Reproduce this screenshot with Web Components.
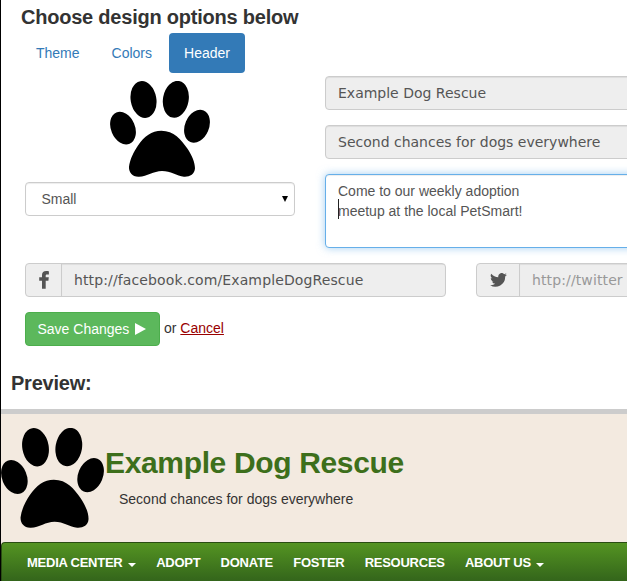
<!DOCTYPE html>
<html lang="en">
<head>
<meta charset="utf-8">
<title>Design options</title>
<style>
body{margin:0;background:#fff;overflow:hidden}
</style>
</head>
<body>
<design-page></design-page>
<script>
function define(name, html){
  customElements.define(name, class extends HTMLElement{
    constructor(){
      super();
      this.attachShadow({mode:'open'}).innerHTML = html;
    }
  });
}

define('paw-mark', `
<style>:host{display:block}svg{display:block;width:100%;height:100%}</style>
<svg viewBox="30 32.5 300 288.5" preserveAspectRatio="none">
<ellipse cx="130.5" cy="88" rx="38.5" ry="55.8" transform="rotate(-10 130.5 88)"/>
<ellipse cx="227.5" cy="87.5" rx="38.5" ry="55.8" transform="rotate(10 227.5 87.5)"/>
<ellipse cx="69" cy="174" rx="36" ry="51" transform="rotate(-23 69 174)"/>
<ellipse cx="291" cy="168.5" rx="36" ry="51.2" transform="rotate(23 291 168.5)"/>
<path d="M184 182C222 182 243 209 262 235C276 256 285 276 285 295C284 314 268 321 252 320C230 318 212 303 186 303C160 303 142 320 117 320C97 321 86 307 87 290C90 267 101 245 114 226C133 199 155 182 184 182Z"/>
</svg>`);

define('tab-item', `
<style>
:host{display:block;padding:10px 15px;border-radius:4px;color:#337ab7;line-height:20px}
:host([active]){background:#337ab7;color:#fff}
</style><slot></slot>`);

define('text-field', `
<style>
:host{display:block;box-sizing:border-box;height:34px;padding:6px 12px;border:1px solid #ccc;border-radius:4px;
background:#eee;color:#555;line-height:20px;white-space:nowrap;overflow:hidden;font-family:"DejaVu Sans",sans-serif;box-shadow:inset 0 1px 1px rgba(0,0,0,.075)}
</style><slot></slot>`);

define('text-box', `<style>
:host{display:block;position:relative;box-sizing:border-box;height:74px;padding:6px 12px;border:1px solid #66afe9;border-radius:4px;
background:#fff;color:#555;line-height:20px;white-space:pre;box-shadow:inset 0 1px 1px rgba(0,0,0,.075),0 0 8px rgba(102,175,233,.6)}
i{position:absolute;left:12px;top:24px;width:1px;height:20px;background:#222}
</style><slot></slot><i></i>`);

define('select-box', `
<style>
:host{display:flex;align-items:center;justify-content:space-between;box-sizing:border-box;height:34px;padding:0 6px 0 15.400px;border:1px solid #ccc;border-radius:4px;
color:#555;line-height:20px;box-shadow:inset 0 1px 1px rgba(0,0,0,.075)}
svg{display:block}
</style><slot></slot><svg width="6" height="6" viewBox="0 0 6 6"><path d="M0 0h6L3 6z" fill="#000"/></svg>`);

define('icon-field', `
<style>
:host{display:flex;box-sizing:border-box;height:34px;border:1px solid #ccc;border-radius:4px;background:#eee;color:#555;overflow:hidden}
.icon{box-sizing:border-box;width:var(--addon,36px);border-right:1px solid #ccc;display:flex;align-items:center;justify-content:center;flex:none}
.value{flex:1;padding:6px 12px;line-height:20px;white-space:nowrap;font-family:"DejaVu Sans",sans-serif;letter-spacing:.12px;box-shadow:inset 0 1px 1px rgba(0,0,0,.075)}
:host([empty]) .value{color:#999}
</style><div class="icon"><slot name="icon"></slot></div><div class="value"><slot></slot></div>`);

define('save-button', `
<style>
:host{display:flex;align-items:center;box-sizing:border-box;width:135px;height:34px;padding:0 12px 0 11.5px;border:1px solid #4cae4c;border-radius:4px;background:#5cb85c;color:#fff;gap:6px;white-space:nowrap}
svg{display:block;margin-top:-1px}
</style><slot></slot><svg width="11" height="12" viewBox="0 0 11 12"><path d="M0 0 11 6 0 12z" fill="#fff"/></svg>`);

define('nav-item', `
<style>
:host{display:flex;align-items:center;gap:5.500px;height:20px;line-height:20px}
svg{display:none;margin-top:3px}
:host([menu]) svg{display:block}
</style><slot></slot><svg width="8" height="4" viewBox="0 0 8 4"><path d="M0 0h8L4 4z" fill="#fff"/></svg>`);

define('site-nav', `
<style>
:host{display:flex;box-sizing:border-box;height:52px;padding:10px 25px;gap:20.200px;border:1px solid #294d12;border-radius:4px 0 0 0;border-right:0;
background:linear-gradient(#549422,#30601a 42px);color:#fff;font-weight:bold;font-size:13px;letter-spacing:-.25px;white-space:nowrap}
</style><slot></slot>`);

define('site-banner', `
<style>
:host{display:block;border-top:5px solid #ccc;background:#f3eae0}
.brand{display:flex;height:128px;box-sizing:border-box;padding-top:14px}
paw-mark{width:103px;height:100px;flex:none}
.title{font-size:30px;font-weight:bold;line-height:34px;letter-spacing:-.35px;color:#3d6f1b;margin:18px 0 0 1px}
.tag{line-height:20px;margin:9px 0 0 15px;color:#333}
</style>
<div class="brand"><paw-mark></paw-mark><div><div class="title"><slot name="title"></slot></div><div class="tag"><slot name="tag"></slot></div></div></div>
<slot></slot>`);

define('design-page', `
<style>
:host{display:block;box-sizing:border-box;width:627px;height:581px;overflow:hidden;border-left:1px solid #000;background:#fff;color:#333;
font:14px/20px "Liberation Sans",Arial,sans-serif}
h2{margin:0;font-size:20px;line-height:22px;font-weight:bold;letter-spacing:-.22px}
.top{padding:6px 0 0 20px}
.tabs{display:flex;gap:2px;margin-top:5px}
.cols{display:grid;grid-template-columns:270px 340px;gap:30px;padding:3px 0 0 24px}
.logo{padding-top:5px}
.logo paw-mark{width:100px;height:96px;margin:0 auto 5px}
.fields{display:grid;gap:15px}
.social{display:grid;grid-template-columns:421px 421px;gap:30px;padding:15px 0 0 24px}
.social svg{display:block}
.actions{display:flex;align-items:center;padding:15px 0 0 24px;gap:4px}
.actions span{display:block}
.actions .note{padding-bottom:2px}
.actions .cancel{display:inline;color:#900;text-decoration:underline}
.preview{padding:26px 0 15px 10px}
</style>
<div class="top"><h2>Choose design options below</h2>
<div class="tabs"><tab-item>Theme</tab-item><tab-item>Colors</tab-item><tab-item active>Header</tab-item></div></div>
<div class="cols">
<div class="logo"><paw-mark></paw-mark><select-box>Small</select-box></div>
<div class="fields"><text-field>Example Dog Rescue</text-field><text-field>Second chances for dogs everywhere</text-field><text-box>Come to our weekly adoption
meetup at the local PetSmart!</text-box></div>
</div>
<div class="social">
<icon-field><svg slot="icon" width="10" height="18" viewBox="0 0 10 18"><path d="M9.900.2v3.200H8.100C7 3.400 6.700 3.900 6.700 4.700v1.600h3.100l-.4 3.400H6.700v8H3V9.700H.2V6.300H3V4.100C3 1.500 4.600 0 7.100 0c1.200 0 2.300.1 2.800.2z" fill="#555"/></svg>http://facebook.com/ExampleDogRescue</icon-field>
<icon-field empty style="--addon:43px"><svg slot="icon" width="17" height="14" viewBox="0 0 24 20"><path d="M24 2.400a10 10 0 0 1-2.800.8A5 5 0 0 0 23.300.500a10 10 0 0 1-3.100 1.200A4.900 4.900 0 0 0 11.800 6.200 14 14 0 0 1 1.700 1a4.900 4.900 0 0 0 1.500 6.600A5 5 0 0 1 1 7a4.900 4.900 0 0 0 3.900 4.900 5 5 0 0 1-2.200.1 4.900 4.900 0 0 0 4.600 3.400A10 10 0 0 1 0 17.400 14 14 0 0 0 21.500 5a10 10 0 0 0 2.500-2.600z" fill="#555"/></svg>http://twitter</icon-field>
</div>
<div class="actions"><save-button>Save Changes</save-button><span class="note">or <span class="cancel">Cancel</span></span></div>
<div class="preview"><h2>Preview:</h2></div>
<site-banner><span slot="title">Example Dog Rescue</span><span slot="tag">Second chances for dogs everywhere</span><site-nav><nav-item menu>MEDIA CENTER</nav-item><nav-item>ADOPT</nav-item><nav-item>DONATE</nav-item><nav-item>FOSTER</nav-item><nav-item>RESOURCES</nav-item><nav-item menu>ABOUT US</nav-item></site-nav></site-banner>`);
</script>
</body>
</html>
